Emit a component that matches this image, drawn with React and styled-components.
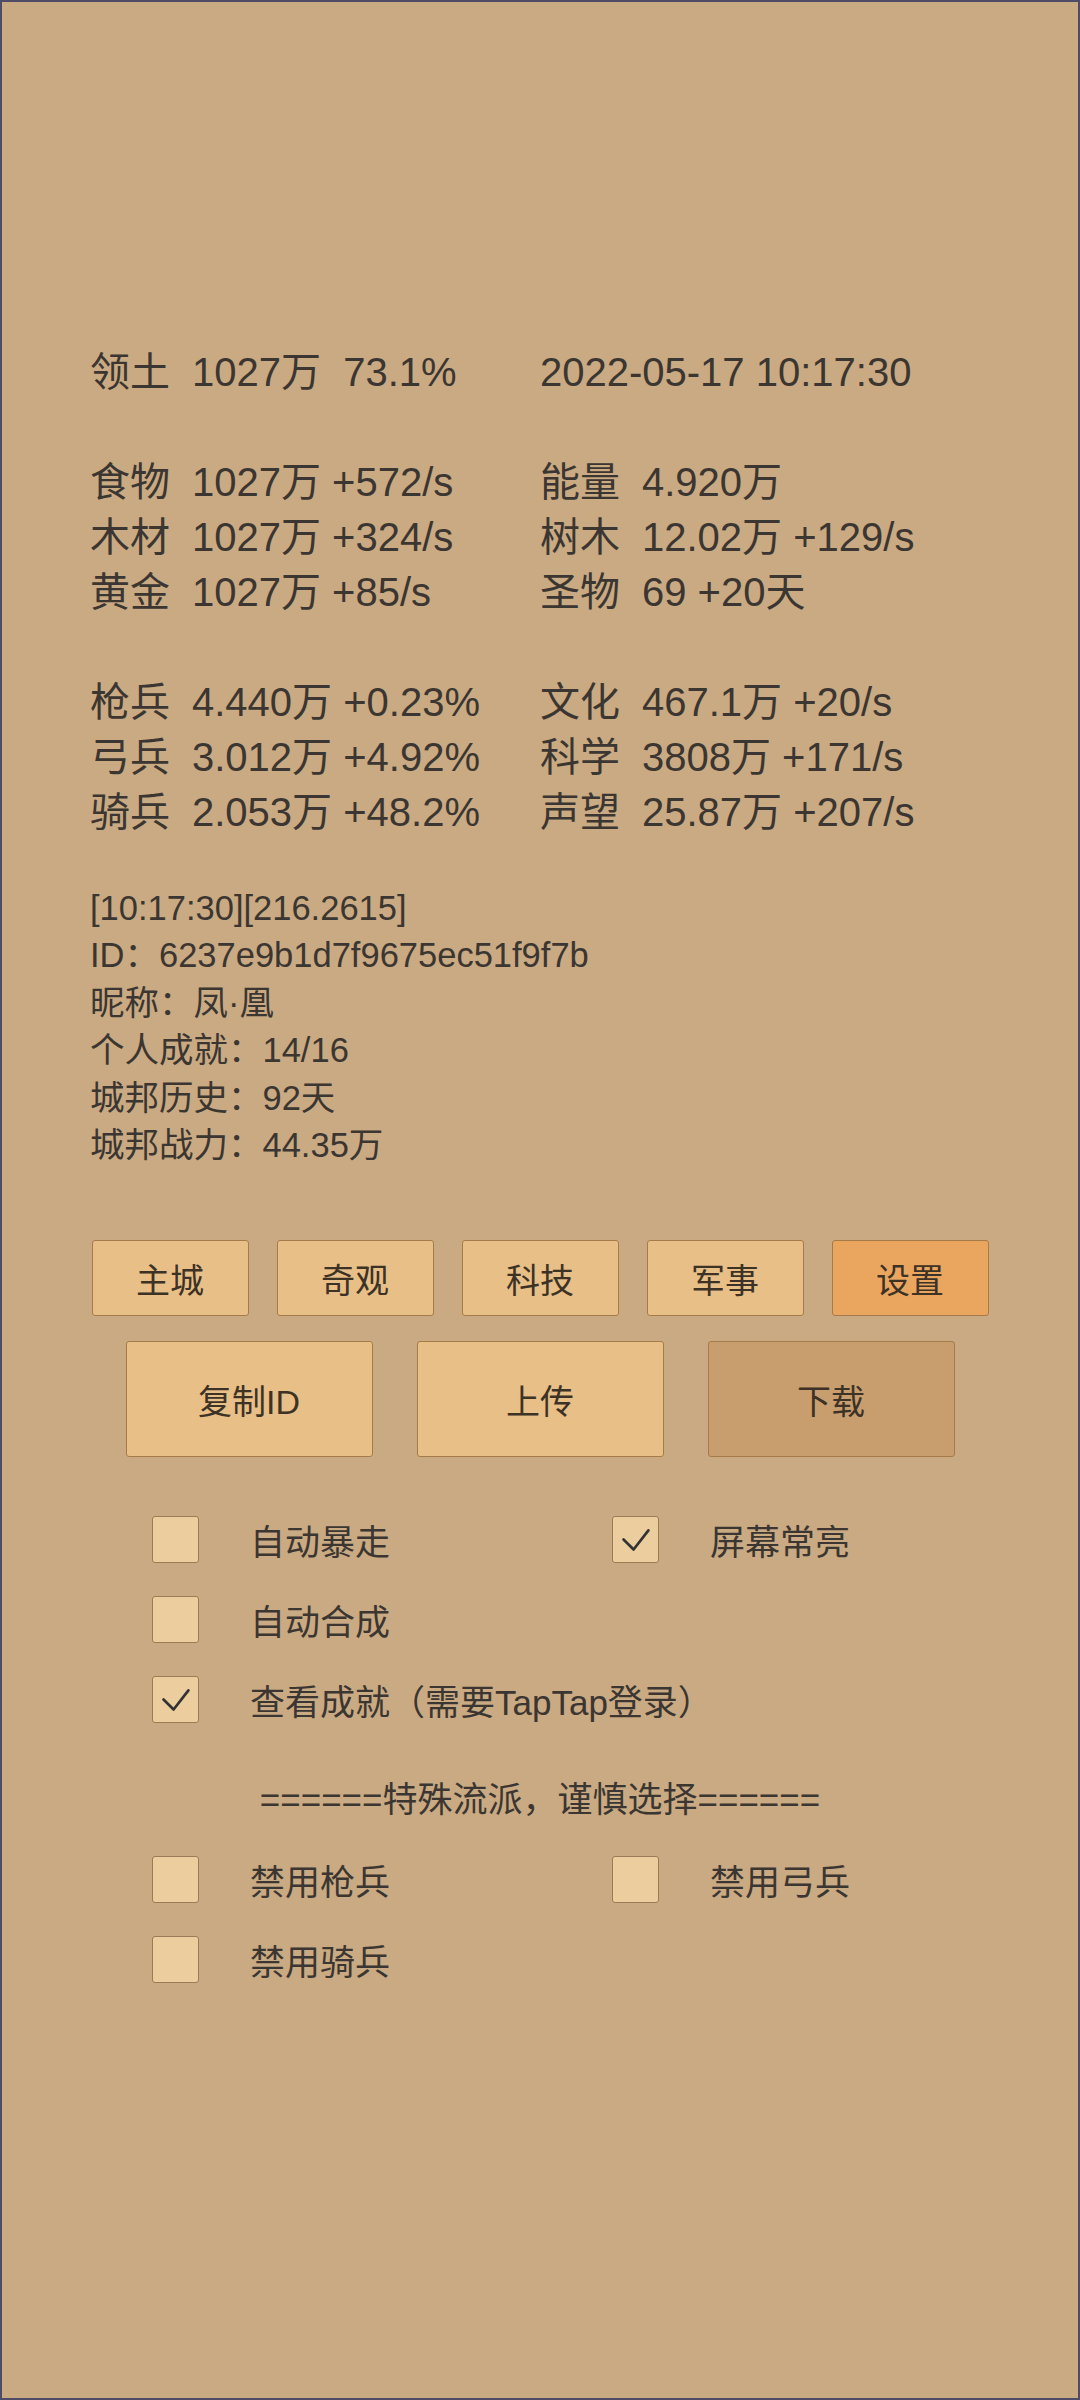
import React from 'react';
import styled, { createGlobalStyle } from 'styled-components';

const GlobalStyle = createGlobalStyle`
  body {
    margin: 0;
    background: #caaa82;
  }
`;

const Screen = styled.div`
  width: 1080px;
  height: 2400px;
  box-sizing: border-box;
  border: 2px solid #4f4d66;
  background: #caaa82;
  padding-top: 343px;
  color: #3b3631;
  font-family: "Liberation Sans", "Noto Sans CJK SC", sans-serif;
`;

const StatRow = styled.div`
  display: grid;
  grid-template-columns: 450px 1fr;
  padding-left: 88px;
  height: 55px;
  line-height: 55px;
  font-size: 40px;
  white-space: pre;
`;

const Stat = styled.div`
  display: flex;
`;

const StatLabel = styled.span`
  width: 102px;
  flex: none;
`;

const Info = styled.div`
  margin-top: 45px;
  padding-left: 88px;
  font-size: 34.5px;
  line-height: 47.4px;
`;

const ButtonRow = styled.div`
  display: flex;
  justify-content: center;
  gap: ${(p) => p.gap}px;
  margin-top: ${(p) => p.top}px;
`;

const TabButton = styled.button`
  width: ${(p) => p.w}px;
  height: ${(p) => p.h}px;
  box-sizing: border-box;
  border: 1.5px solid #a67b4a;
  border-radius: 3px;
  background: ${(p) => p.bg || '#e8bf86'};
  color: #3d3226;
  font-family: inherit;
  font-size: 34px;
  padding: 0;
`;

const Options = styled.div`
  margin-top: 42px;
`;

const OptionRow = styled.div`
  display: grid;
  grid-template-columns: 460px 460px;
  padding-left: 150px;
  height: 80px;
`;

const Option = styled.label`
  display: flex;
  align-items: center;
  gap: 51px;
  font-size: 35px;
  white-space: nowrap;
`;

const Box = styled.span`
  width: 47px;
  height: 47px;
  box-sizing: border-box;
  flex: none;
  border: 1.5px solid #9a7b58;
  border-radius: 3px;
  background: #ebcd9e;
  display: flex;
  align-items: center;
  justify-content: center;
`;

const SectionTitle = styled.div`
  padding-top: 21px;
  height: 79px;
  line-height: 79px;
  text-align: center;
  font-size: 35px;
`;

const Check = () => (
  <svg width="47" height="47" viewBox="0 0 47 47">
    <path d="M11 23.5 L21.5 34 L37 14" fill="none" stroke="#333" strokeWidth="2.8" strokeLinecap="round" strokeLinejoin="round" />
  </svg>
);

const CheckItem = ({ label, checked }) => (
  <Option>
    <Box>{checked && <Check />}</Box>
    <span>{label}</span>
  </Option>
);

const stats = [
  [{ label: '领土', value: '1027万  73.1%' }, { value: '2022-05-17 10:17:30' }],
  null,
  [{ label: '食物', value: '1027万 +572/s' }, { label: '能量', value: '4.920万' }],
  [{ label: '木材', value: '1027万 +324/s' }, { label: '树木', value: '12.02万 +129/s' }],
  [{ label: '黄金', value: '1027万 +85/s' }, { label: '圣物', value: '69 +20天' }],
  null,
  [{ label: '枪兵', value: '4.440万 +0.23%' }, { label: '文化', value: '467.1万 +20/s' }],
  [{ label: '弓兵', value: '3.012万 +4.92%' }, { label: '科学', value: '3808万 +171/s' }],
  [{ label: '骑兵', value: '2.053万 +48.2%' }, { label: '声望', value: '25.87万 +207/s' }],
];

const info = [
  '[10:17:30][216.2615]',
  'ID：6237e9b1d7f9675ec51f9f7b',
  '昵称：凤·凰',
  '个人成就：14/16',
  '城邦历史：92天',
  '城邦战力：44.35万',
];

const tabs = [
  { name: '主城' },
  { name: '奇观' },
  { name: '科技' },
  { name: '军事' },
  { name: '设置', bg: '#eaa65f' },
];

const actions = [
  { name: '复制ID' },
  { name: '上传' },
  { name: '下载', bg: '#c89e6e' },
];

const renderStat = (s) =>
  s ? (
    <Stat>
      {s.label && <StatLabel>{s.label}</StatLabel>}
      <span>{s.value}</span>
    </Stat>
  ) : (
    <div />
  );

export default function App() {
  return (
    <>
      <GlobalStyle />
      <Screen>
        {stats.map((row, i) => (
          <StatRow key={i}>
            {row && renderStat(row[0])}
            {row && renderStat(row[1])}
          </StatRow>
        ))}

        <Info>
          {info.map((line) => (
            <div key={line}>{line}</div>
          ))}
        </Info>

        <ButtonRow gap={28} top={71}>
          {tabs.map((t) => (
            <TabButton key={t.name} w={157} h={76} bg={t.bg}>
              {t.name}
            </TabButton>
          ))}
        </ButtonRow>
        <ButtonRow gap={44} top={25}>
          {actions.map((t) => (
            <TabButton key={t.name} w={247} h={116} bg={t.bg}>
              {t.name}
            </TabButton>
          ))}
        </ButtonRow>

        <Options>
          <OptionRow>
            <CheckItem label="自动暴走" />
            <CheckItem label="屏幕常亮" checked />
          </OptionRow>
          <OptionRow>
            <CheckItem label="自动合成" />
          </OptionRow>
          <OptionRow>
            <CheckItem label="查看成就（需要TapTap登录）" checked />
          </OptionRow>
          <SectionTitle>======特殊流派，谨慎选择======</SectionTitle>
          <OptionRow>
            <CheckItem label="禁用枪兵" />
            <CheckItem label="禁用弓兵" />
          </OptionRow>
          <OptionRow>
            <CheckItem label="禁用骑兵" />
          </OptionRow>
        </Options>
      </Screen>
    </>
  );
}
